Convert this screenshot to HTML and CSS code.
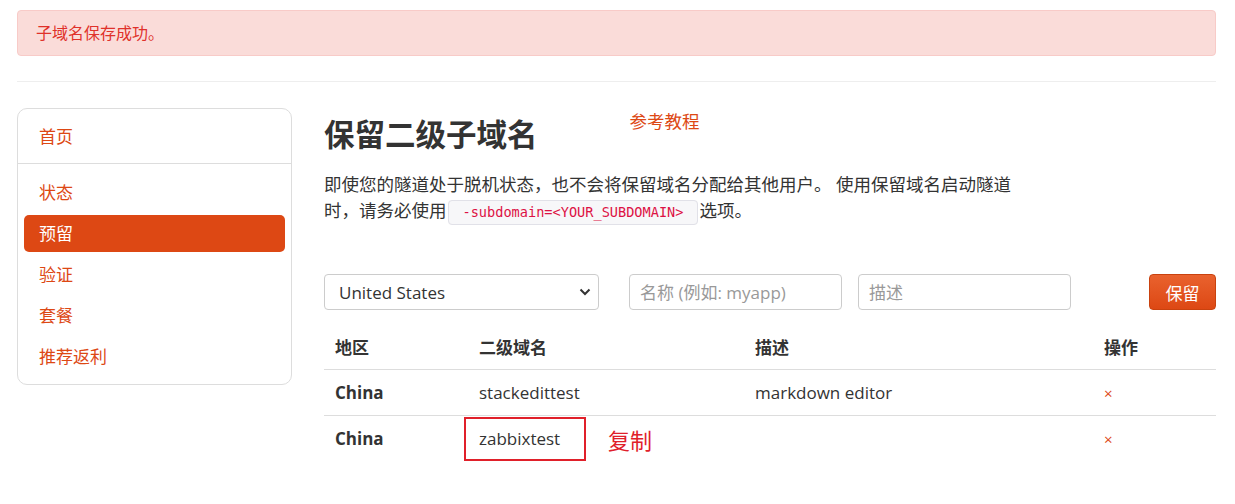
FILE: index.html
```html
<!DOCTYPE html>
<html lang="zh-CN">
<head>
    <meta charset="UTF-8">
    <meta name="viewport" content="width=device-width, initial-scale=1.0">
    <title>保留二级子域名</title>
    <link rel="stylesheet" href="styles.css">
</head>
<body>
    <div class="container">
        <div class="alert">子域名保存成功。</div>
        <hr class="divider">

        <div class="layout">
            <aside class="sidebar">
                <a href="#" class="nav-home">首页</a>
                <ul class="nav-list">
                    <li><a href="#">状态</a></li>
                    <li class="active"><a href="#">预留</a></li>
                    <li><a href="#">验证</a></li>
                    <li><a href="#">套餐</a></li>
                    <li><a href="#">推荐返利</a></li>
                </ul>
            </aside>

            <main class="content">
                <div class="title-row">
                    <h1>保留二级子域名</h1>
                    <a href="#" class="guide-link">参考教程</a>
                </div>
                <p class="intro">即使您的隧道处于脱机状态，也不会将保留域名分配给其他用户。 使用保留域名启动隧道时，请务必使用<code>-subdomain=&lt;YOUR_SUBDOMAIN&gt;</code>选项。</p>

                <form class="reserve-form">
                    <div class="select-wrap">
                        <select class="field region-select">
                            <option>United States</option>
                            <option>China</option>
                        </select>
                        <svg class="caret" width="12" height="8" viewBox="0 0 12 8"><path d="M1.5 1.5 L6 6 L10.5 1.5" fill="none" stroke="#333" stroke-width="2"/></svg>
                    </div>
                    <input class="field name-input" type="text" placeholder="名称 (例如: myapp)">
                    <input class="field desc-input" type="text" placeholder="描述">
                    <button type="button" class="btn-reserve">保留</button>
                </form>

                <table class="domains">
                    <thead>
                        <tr>
                            <th class="col-region">地区</th>
                            <th class="col-sub">二级域名</th>
                            <th class="col-desc">描述</th>
                            <th class="col-op">操作</th>
                        </tr>
                    </thead>
                    <tbody>
                        <tr>
                            <td class="region">China</td>
                            <td>stackedittest</td>
                            <td>markdown editor</td>
                            <td><a href="#" class="remove">×</a></td>
                        </tr>
                        <tr>
                            <td class="region">China</td>
                            <td class="copy-cell"><span class="copy-box">zabbixtest</span><span class="copy-note">复制</span></td>
                            <td></td>
                            <td><a href="#" class="remove">×</a></td>
                        </tr>
                    </tbody>
                </table>
            </main>
        </div>
    </div>
</body>
</html>
```

FILE: styles.css
```css
body {
    margin: 0;
    font-family: "Open Sans", "Noto Sans CJK SC", sans-serif;
    font-size: 16px;
    color: #333;
    background-color: #fff;
}
a {
    color: #dd4814;
    text-decoration: none;
}
.container {
    width: 1199px;
    margin: 0 17px;
    padding-top: 10px;
}
.alert {
    background-color: #fadcd9;
    border: 1px solid #f8cbc8;
    border-radius: 4px;
    color: #e0312a;
    padding: 11px 18px;
    font-size: 16px;
    line-height: 22px;
}
.divider {
    border: 0;
    border-top: 1px solid #eee;
    margin: 25px 0 26px;
}
.layout {
    display: grid;
    grid-template-columns: 275px 1fr;
    gap: 32px;
    align-items: start;
}

/* 侧边栏 */
.sidebar {
    border: 1px solid #ddd;
    border-radius: 10px;
    padding-bottom: 5px;
}
.nav-home {
    display: block;
    padding: 16px 21px 14px;
    font-size: 17px;
    line-height: 24px;
    border-bottom: 1px solid #ddd;
}
.nav-list {
    list-style: none;
    margin: 0;
    padding: 10px 6px 0;
}
.nav-list li a {
    display: block;
    padding: 6px 15px;
    font-size: 17px;
    line-height: 25px;
    border-radius: 5px;
    margin-bottom: 4px;
}
.nav-list li.active a {
    background-color: #dd4814;
    color: #fff;
}

/* 主内容 */
.title-row {
    display: flex;
    align-items: flex-start;
    margin-top: 7px;
}
.title-row h1 {
    margin: 0;
    font-size: 30.5px;
    line-height: 38px;
    font-weight: bold;
    color: #333;
}
.guide-link {
    margin-left: 92px;
    font-size: 17.5px;
    line-height: 24px;
    margin-top: -6px;
}
.intro {
    width: 700px;
    margin: 18px 0 0;
    font-size: 17.5px;
    line-height: 26px;
}
.intro code {
    font-family: "DejaVu Sans Mono", monospace;
    font-size: 13.6px;
    color: #d14;
    background-color: #f7f7f9;
    border: 1px solid #e1e1e8;
    border-radius: 4px;
    padding: 3px 14px 4px;
    margin: 0 1px;
}
.reserve-form {
    display: flex;
    align-items: center;
    margin-top: 49px;
}
.field {
    height: 36px;
    box-sizing: border-box;
    border: 1px solid #ccc;
    border-radius: 4px;
    font-family: inherit;
    font-size: 17px;
    color: #333;
    padding: 0 10px;
    background: #fff;
}
.field::placeholder {
    color: #999;
}
.select-wrap {
    position: relative;
    width: 275px;
}
.region-select {
    width: 100%;
    appearance: none;
    padding-left: 14px;
}
.caret {
    position: absolute;
    right: 8px;
    top: 14px;
    pointer-events: none;
}
.name-input {
    width: 213px;
    margin-left: 30px;
}
.desc-input {
    width: 213px;
    margin-left: 16px;
}
.btn-reserve {
    margin-left: auto;
    width: 67px;
    height: 36px;
    border: 1px solid #c9420f;
    border-radius: 4px;
    background: linear-gradient(#e9622e, #dd4814);
    color: #fff;
    font-family: inherit;
    font-size: 17px;
    cursor: pointer;
}

/* 表格 */
.domains {
    width: 100%;
    border-collapse: collapse;
    margin-top: 14px;
}
.domains th,
.domains td {
    text-align: left;
    padding: 0 11px;
    height: 45px;
    font-size: 17px;
}
.domains th {
    font-weight: bold;
    border-bottom: 1px solid #ddd;
}
.domains tbody tr:first-child td {
    border-bottom: 1px solid #ddd;
}
.col-region { width: 122px; }
.col-sub { width: 254px; }
.col-desc { width: 327px; }
.region {
    font-weight: bold;
}
.remove {
    font-size: 15px;
}
.copy-box {
    display: inline-block;
    vertical-align: middle;
    border: 2px solid #e0202a;
    margin-left: -15px;
    padding: 0 0 0 13px;
    width: 122px;
    height: 44px;
    line-height: 40px;
    box-sizing: border-box;
}
.copy-note {
    color: #e0202a;
    font-size: 22px;
    margin-left: 22px;
    vertical-align: middle;
}
```
